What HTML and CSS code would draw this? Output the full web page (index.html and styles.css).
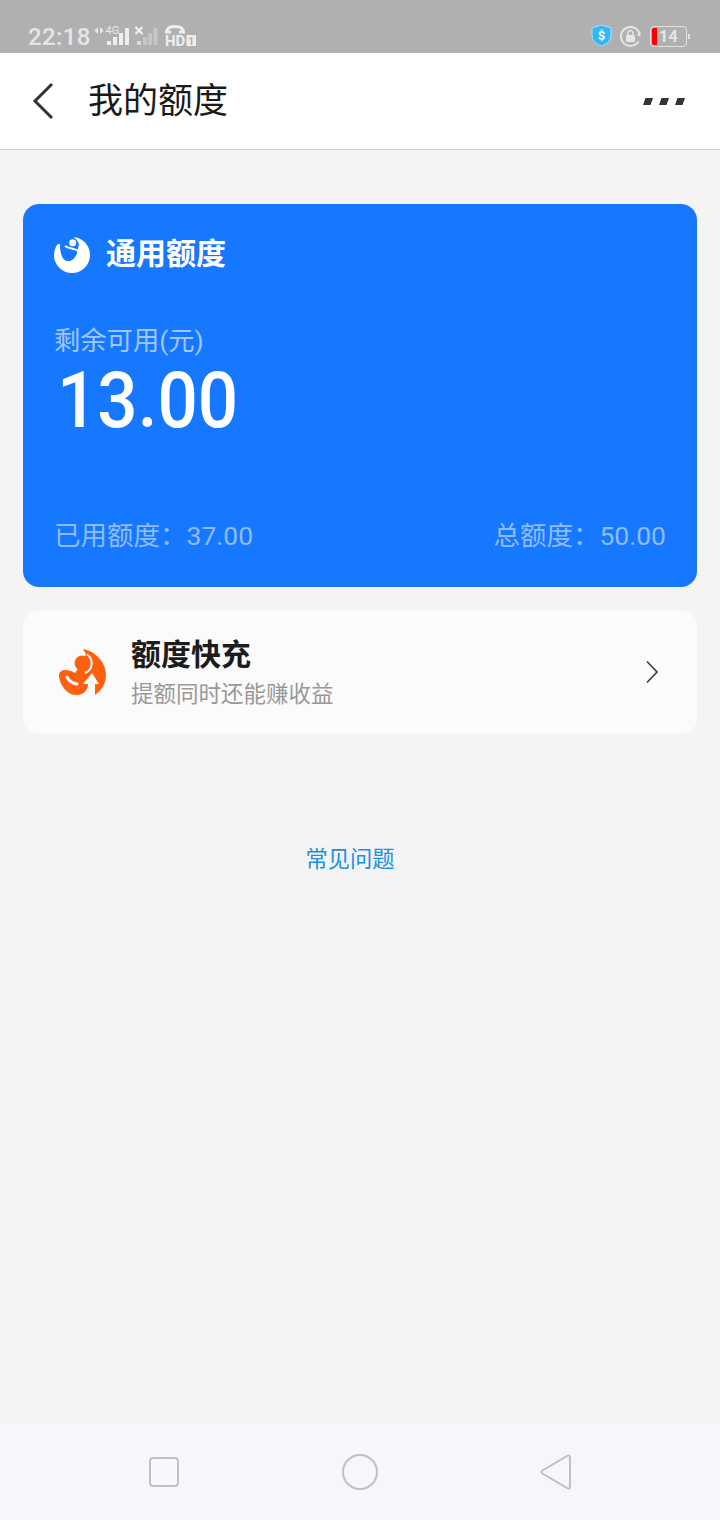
FILE: index.html

```html
<!DOCTYPE html>
<html lang="zh-CN">
<head>
<meta charset="utf-8">
<title>我的额度</title>
<link rel="stylesheet" href="styles.css">
</head>
<body>
<div class="page">

  <!-- status bar -->
  <div class="status">
    <div class="status-left">
      <span class="time">22:18</span>
      <svg class="signals" width="104" height="27" viewBox="0 0 104 27">
        <path d="M4 3v7L0.500 6.500zM6 3v7L9.500 6.500z" fill="#e8e8e8"/>
        <text x="11.500" y="10" class="net">4G</text>
        <rect x="13" y="17" width="4" height="4" fill="#eee"/>
        <rect x="19" y="13" width="4" height="8" fill="#eee"/>
        <rect x="25" y="9" width="4" height="12" fill="#eee"/>
        <rect x="31" y="4" width="4" height="17" fill="#eee"/>
        <path d="M41.500 3l7 7M48.500 3l-7 7" stroke="#eee" stroke-width="2.200"/>
        <rect x="43" y="17" width="4" height="4" fill="#dcdcdc"/>
        <rect x="49" y="13" width="4" height="8" fill="#c6c6c6"/>
        <rect x="54" y="9" width="4" height="12" fill="#c6c6c6"/>
        <rect x="59.500" y="4" width="4" height="17" fill="#c6c6c6"/>
        <path d="M73 8V7.500Q73 2.500 81 2.500T89 7.500V8" fill="none" stroke="#eee" stroke-width="2.800"/>
        <rect x="71" y="6.500" width="6" height="3" fill="#eee"/>
        <rect x="85" y="6.500" width="6" height="3" fill="#eee"/>
        <text x="71" y="22" class="hd">HD</text>
        <rect x="92.500" y="11" width="9.500" height="11" fill="#eee"/>
        <text x="97.250" y="20.500" class="hd-num">1</text>
      </svg>
    </div>
    <div class="status-right">
      <svg width="21" height="23" viewBox="0 0 21 23">
        <path d="M10.500 1l9.500 3v7q0 8-9.500 11Q1 19 1 11V4z" fill="#2fb8f5" stroke="#a5e3fb" stroke-width="1"/>
        <text x="10.500" y="16" class="dollar">$</text>
      </svg>
      <svg class="lock" width="21" height="21" viewBox="0 0 21 21">
        <path d="M18.500 15.500A9.500 9.500 0 1 1 19.500 7.500" fill="none" stroke="#e6e6e6" stroke-width="2"/>
        <path d="M16.500 8.500l3.500 2 1-4z" fill="#e6e6e6"/>
        <rect x="6" y="9" width="9" height="7" rx="1" fill="#e6e6e6"/>
        <path d="M8 10V7a2.500 2.500 0 0 1 5 0V10" fill="none" stroke="#e6e6e6" stroke-width="1.500"/>
      </svg>
      <div class="battery">
        <div class="battery-box">
          <span class="battery-fill"></span>
          <span class="battery-num">14</span>
        </div>
        <span class="battery-tip"></span>
      </div>
    </div>
  </div>

  <!-- title bar -->
  <div class="titlebar">
    <svg class="back" width="24" height="38" viewBox="0 0 24 38">
      <path d="M21 2L4 19l17 17" fill="none" stroke="#333" stroke-width="3"/>
    </svg>
    <h1 class="title">我的额度</h1>
    <svg class="more" width="42" height="7" viewBox="0 0 42 7">
      <path d="M2.500 0h7.500l-2.500 7H0zM18.500 0h7.500l-2.500 7h-7.500zM34.500 0h7.500l-2.500 7h-7.500z" fill="#333"/>
    </svg>
  </div>

  <div class="content">
    <div class="quota-card">
      <div class="quota-head">
        <svg width="36" height="38" viewBox="0 0 36 38">
          <circle cx="18" cy="20" r="18" fill="#fff"/>
          <path d="M-1-1H15C20 2 24 5 25 9L24 14C23 22 18 27 13 26C8 25 6 18 6 9L-1 9Z" fill="#1677ff"/>
          <path d="M11 11C15 14 19 13 25 16" fill="none" stroke="#fff" stroke-width="2"/>
          <circle cx="18.700" cy="7.700" r="3.500" fill="#fff"/>
        </svg>
        <span class="quota-name">通用额度</span>
      </div>
      <div class="remain-label">剩余可用(元)</div>
      <div class="remain-num">13.00</div>
      <div class="quota-foot">
        <span>已用额度：37.00</span>
        <span>总额度：50.00</span>
      </div>
    </div>

    <div class="charge-card">
      <svg class="charge-icon" width="48" height="49" viewBox="0 0 48 49">
        <path d="M24 1C36 3 47 14 47 27C47 36 42 43 36 47L36 36H40L33 25L24 36H29C29 41 26 47 17 47C8 47 0 36 0 27C0 24 3 22 6 22C10 22 13 23 16 25L23 15L27 6Z" fill="#ff6010"/>
        <circle cx="23" cy="15" r="7.500" fill="#ff6010"/>
        <path d="M28 6.500A10.500 10.500 0 0 1 26 25" fill="none" stroke="#fbfbfb" stroke-width="2"/>
        <path d="M8 29C10 33 14 35.500 18 36" fill="none" stroke="#fbfbfb" stroke-width="3" stroke-linecap="round"/>
      </svg>
      <div class="charge-text">
        <div class="charge-title">额度快充</div>
        <div class="charge-sub">提额同时还能赚收益</div>
      </div>
      <svg class="chevron" width="14" height="24" viewBox="0 0 14 24">
        <path d="M2 1.500l10 10.500L2 22.500" fill="none" stroke="#444" stroke-width="1.800"/>
      </svg>
    </div>

    <div class="faq">常见问题</div>
  </div>

  <!-- nav bar -->
  <div class="navbar">
    <svg width="30" height="30" viewBox="0 0 30 30"><rect x="1" y="1" width="28" height="28" rx="3" fill="none" stroke="#c0c0c0" stroke-width="2"/></svg>
    <svg width="36" height="36" viewBox="0 0 36 36"><circle cx="18" cy="18" r="17" fill="none" stroke="#c0c0c0" stroke-width="2"/></svg>
    <svg width="32" height="36" viewBox="0 0 32 36"><path d="M28 1.500Q30 1 30 3.500V32.500Q30 35 28 34.500L2.500 19.500Q0.500 18 2.500 16.500z" fill="none" stroke="#c0c0c0" stroke-width="2"/></svg>
  </div>
</div>
</body>
</html>
```

FILE: styles.css

```css
* { box-sizing: border-box; }
body {
  margin: 0;
  font-family: Roboto, "Noto Sans CJK SC", sans-serif;
  background: #f4f4f5;
}
.page {
  width: 720px;
  height: 1520px;
  display: flex;
  flex-direction: column;
  overflow: hidden;
}

/* status bar */
.status {
  height: 53px;
  background: #b0b0b0;
  display: flex;
  justify-content: space-between;
  padding: 0 30px 0 28px;
  color: #e6e6e6;
}
.status-left { display: flex; align-items: flex-end; padding-bottom: 2px; }
.status-right { display: flex; align-items: flex-end; padding-bottom: 6px; }
.time { font-size: 24px; line-height: 28px; letter-spacing: 0.4px; font-weight: 500; }
.signals { margin: 0 0 0 3px; }
.net { font-size: 11px; fill: #e8e8e8; font-family: Roboto, sans-serif; }
.hd { font-size: 15px; font-weight: 700; fill: #eee; font-family: Roboto, sans-serif; }
.hd-num { font-size: 11px; font-weight: 700; fill: #b0b0b0; text-anchor: middle; font-family: Roboto, sans-serif; }
.dollar { font-size: 13px; font-weight: 700; fill: #fff; text-anchor: middle; font-family: Roboto, sans-serif; }
.lock { margin: 0 9px 0 8px; }
.battery { display: flex; align-items: center; gap: 1px; }
.battery-box {
  width: 37px;
  height: 21px;
  border: 1px solid #e0e0e0;
  border-radius: 4px;
  display: flex;
  align-items: center;
  padding-left: 1px;
}
.battery-fill { width: 5px; height: 17px; background: #fc0000; border-radius: 2px 0 0 2px; }
.battery-num { font-size: 16px; font-weight: 700; margin-left: 2px; letter-spacing: 0.3px; }
.battery-tip { width: 2px; height: 5px; background: #e0e0e0; }

/* title bar */
.titlebar {
  height: 97px;
  background: #fff;
  border-bottom: 1px solid #cfcfcf;
  display: flex;
  align-items: center;
  padding: 0 35px 0 31px;
}
.back { flex: none; }
.title {
  flex: 1;
  margin: 2px 0 0 33px;
  font-size: 35px;
  line-height: 48px;
  font-weight: 400;
  color: #1a1a1a;
}

/* cards */
.content { flex: 1; padding: 54px 23px 0; }
.quota-card {
  height: 383px;
  background: #1677ff;
  border-radius: 16px;
  padding: 30px 31px 0;
  color: #fff;
}
.quota-head { display: flex; align-items: center; gap: 16px; height: 40px; }
.quota-name { font-size: 30px; font-weight: 700; line-height: 40px; }
.remain-label { margin-top: 49px; font-size: 26.3px; line-height: 36px; color: #9fc6ff; }
.remain-num {
  margin-left: 3px;
  font-size: 78px;
  font-weight: 500;
  line-height: 84px;
  transform: scaleX(0.91);
  transform-origin: left center;
}
.quota-foot {
  display: flex;
  justify-content: space-between;
  margin-top: 74px;
  font-size: 26.5px;
  line-height: 38px;
  color: #8fbcff;
}
.charge-card {
  height: 124px;
  margin-top: 23px;
  background: #fbfbfb;
  border-radius: 16px;
  display: flex;
  align-items: center;
  padding: 0 38px 0 36px;
}
.charge-icon { flex: none; }
.charge-text { flex: 1; margin-left: 24px; }
.charge-title { font-size: 30px; line-height: 40px; font-weight: 700; color: #1c1c1c; }
.charge-sub { margin-top: 3px; font-size: 22.5px; line-height: 32px; color: #999; }
.faq {
  margin-top: 109px;
  padding-right: 20px;
  text-align: center;
  font-size: 22.3px;
  line-height: 32px;
  color: #1a8fe3;
}

/* nav bar */
.navbar {
  height: 96px;
  background: #f6f7fb;
  display: flex;
  justify-content: space-between;
  align-items: center;
  padding: 0 148px 0 149px;
}
```
